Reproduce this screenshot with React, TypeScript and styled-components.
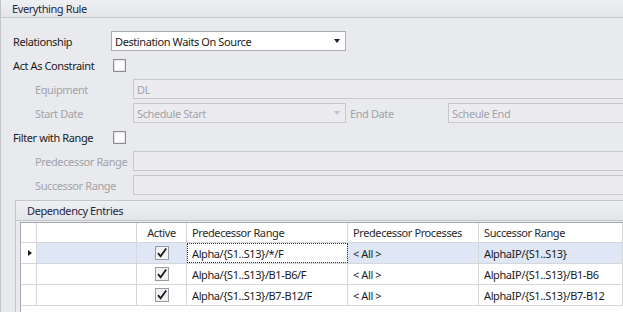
import React from "react";
import styled, { createGlobalStyle } from "styled-components";

const Global = createGlobalStyle`
  html, body { margin: 0; padding: 0; background: #e9eaee; overflow: hidden; }
  body { font-family: "Noto Sans", "Open Sans", sans-serif; font-size: 11px; letter-spacing: -0.4px; color: #1b1b1b; }
  * { box-sizing: border-box; }
`;

const Page = styled.div`
  width: 623px;
  height: 312px;
  overflow: hidden;
  background: #e9eaee;
  border-left: 1px solid #c3c4c9;
  display: flex;
  flex-direction: column;
`;

const GroupHeader = styled.div<{ $h: number; $pl: number }>`
  height: ${(p) => p.$h}px;
  flex: none;
  padding-left: ${(p) => p.$pl}px;
  display: flex;
  align-items: center;
  background: linear-gradient(#eeeff2, #e4e5e9);
  border-bottom: 1px solid #c6c7cc;
  color: #1e2742;
  font-size: 11px;
  line-height: 1;
`;

const Form = styled.div`
  padding: 13px 0 0 12px;
  margin-right: -10px;
  display: flex;
  flex-direction: column;
  gap: 4px;
`;

const Row = styled.div<{ $indent?: boolean }>`
  height: 20px;
  display: flex;
  align-items: center;
  margin-left: ${(p) => (p.$indent ? 22 : 0)}px;
`;

const Label = styled.div<{ $disabled?: boolean; $w?: number }>`
  width: ${(p) => p.$w ?? 98}px;
  flex: none;
  color: ${(p) => (p.$disabled ? "#a2a3a9" : "#1b1b1b")};
  white-space: nowrap;
`;

const Input = styled.div<{ $disabled?: boolean; $w?: number }>`
  height: 20px;
  ${(p) => (p.$w ? `width: ${p.$w}px; flex: none;` : "flex: 1;")}
  border: 1px solid ${(p) => (p.$disabled ? "#c8c9ce" : "#abacb1")};
  background: ${(p) => (p.$disabled ? "#ececf0" : "#ffffff")};
  color: ${(p) => (p.$disabled ? "#a2a3a9" : "#1b1b1b")};
  display: flex;
  align-items: center;
  padding-left: 3px;
  padding-right: 4px;
  white-space: nowrap;
`;

const InputText = styled.span`
  flex: 1;
`;

const Arrow = styled.span<{ $disabled?: boolean }>`
  width: 0;
  height: 0;
  border-left: 3.5px solid transparent;
  border-right: 3.5px solid transparent;
  border-top: 4px solid ${(p) => (p.$disabled ? "#c2c3c8" : "#1e2030")};
  margin-right: 1px;
`;

const Check = styled.span`
  width: 13px;
  height: 13px;
  margin-left: 2px;
  border: 1px solid #8d8e94;
  background: #fff;
  box-shadow: inset 0 0 0 1px #e4e5e9;
`;

const Gap = styled.span<{ $w: number }>`
  width: ${(p) => p.$w}px;
  flex: none;
`;

const SubGroup = styled.div`
  margin: 5px 0 0 14px;
  flex: 1;
  border-left: 1px solid #c3c4c9;
  border-top: 1px solid #c6c7cc;
  display: flex;
  flex-direction: column;
  min-width: 0;
`;

const GridWrap = styled.div`
  margin: 1px 0 0 4px;
  flex: 1;
  background: #fff;
  border-left: 1px solid #a6a8ae;
  border-top: 1px solid #a6a8ae;
  overflow: hidden;
`;

const cols = "16px 100px 50px 161px 131px 1fr";

const GridRow = styled.div<{ $h: number }>`
  display: grid;
  grid-template-columns: ${cols};
  height: ${(p) => p.$h}px;
  border-bottom: 1px solid #d6d7db;
`;

const Cell = styled.div<{ $sel?: boolean; $focus?: boolean; $center?: boolean }>`
  border-right: 1px solid #d6d7db;
  background: ${(p) => (p.$focus ? "#ffffff" : p.$sel ? "#dfe7f7" : "#ffffff")};
  ${(p) => (p.$focus ? "outline: 1px dotted #333; outline-offset: -1px;" : "")}
  display: flex;
  align-items: center;
  justify-content: ${(p) => (p.$center ? "center" : "flex-start")};
  padding-left: ${(p) => (p.$center ? 0 : 5)}px;
  white-space: nowrap;
  overflow: hidden;
  color: #1b1b1b;
`;

const HeadCell = styled(Cell)`
  background: #ffffff;
  color: #2a2a2a;
`;

const Indicator = styled.span`
  width: 0;
  height: 0;
  border-top: 3.5px solid transparent;
  border-bottom: 3.5px solid transparent;
  border-left: 4px solid #1b1b1b;
  margin-left: 2px;
`;

const GridCheck = () => (
  <svg width="14" height="14" viewBox="0 0 14 14">
    <rect x="0.5" y="0.5" width="13" height="13" fill="#f2f2f4" stroke="#9a9ba0" />
    <path d="M3 7.2 L5.6 10.3 L11.2 2.4" fill="none" stroke="#1b1b1b" strokeWidth="1.8" />
  </svg>
);

const rows = [
  { pred: "Alpha/{S1..S13}/*/F", succ: "AlphaIP/{S1..S13}" },
  { pred: "Alpha/{S1..S13}/B1-B6/F", succ: "AlphaIP/{S1..S13}/B1-B6" },
  { pred: "Alpha/{S1..S13}/B7-B12/F", succ: "AlphaIP/{S1..S13}/B7-B12" },
];

export default function App() {
  return (
    <>
      <Global />
      <Page>
        <GroupHeader $h={18} $pl={11}>Everything Rule</GroupHeader>
        <Form>
          <Row>
            <Label>Relationship</Label>
            <Input $w={235}>
              <InputText>Destination Waits On Source</InputText>
              <Arrow />
            </Input>
          </Row>
          <Row>
            <Label>Act As Constraint</Label>
            <Check />
          </Row>
          <Row $indent>
            <Label $disabled>Equipment</Label>
            <Input $disabled>DL</Input>
          </Row>
          <Row $indent>
            <Label $disabled>Start Date</Label>
            <Input $disabled $w={213}>
              <InputText>Schedule Start</InputText>
              <Arrow $disabled />
            </Input>
            <Gap $w={4} />
            <Label $disabled>End Date</Label>
            <Input $disabled>Scheule End</Input>
          </Row>
          <Row>
            <Label>Filter with Range</Label>
            <Check />
          </Row>
          <Row $indent>
            <Label $disabled>Predecessor Range</Label>
            <Input $disabled />
          </Row>
          <Row $indent>
            <Label $disabled>Successor Range</Label>
            <Input $disabled />
          </Row>
        </Form>
        <SubGroup>
          <GroupHeader $h={20} $pl={11}>Dependency Entries</GroupHeader>
          <GridWrap>
            <GridRow $h={20}>
              <HeadCell />
              <HeadCell />
              <HeadCell $center>Active</HeadCell>
              <HeadCell>Predecessor Range</HeadCell>
              <HeadCell>Predecessor Processes</HeadCell>
              <HeadCell>Successor Range</HeadCell>
            </GridRow>
            {rows.map((r, i) => {
              const sel = i === 0;
              return (
                <GridRow $h={21} key={i}>
                  <Cell>{sel && <Indicator />}</Cell>
                  <Cell $sel={sel} />
                  <Cell $sel={sel} $center>
                    <GridCheck />
                  </Cell>
                  <Cell $sel={sel} $focus={sel}>{r.pred}</Cell>
                  <Cell $sel={sel}>&lt; All &gt;</Cell>
                  <Cell $sel={sel}>{r.succ}</Cell>
                </GridRow>
              );
            })}
          </GridWrap>
        </SubGroup>
      </Page>
    </>
  );
}
